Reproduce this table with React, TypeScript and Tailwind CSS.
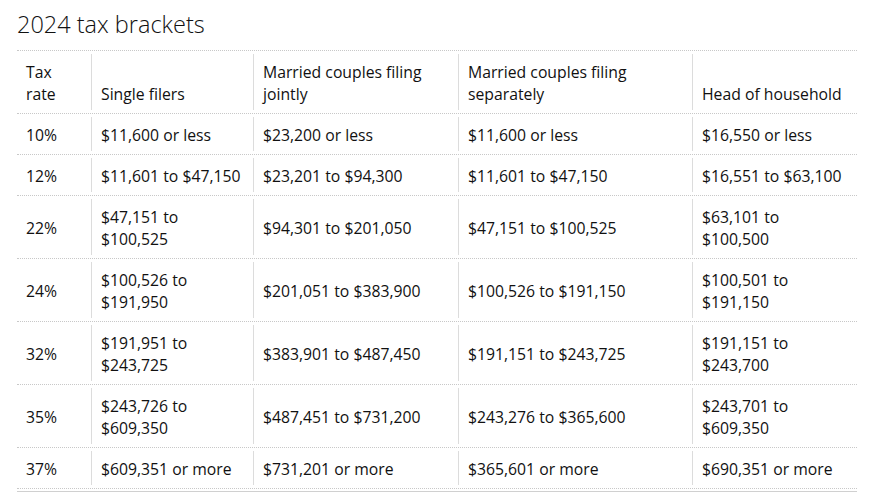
import React from "react";

const header = [
  "Tax rate",
  "Single filers",
  "Married couples filing jointly",
  "Married couples filing separately",
  "Head of household",
];

const rows: string[][] = [
  ["10%", "$11,600 or less", "$23,200 or less", "$11,600 or less", "$16,550 or less"],
  ["12%", "$11,601 to $47,150", "$23,201 to $94,300", "$11,601 to $47,150", "$16,551 to $63,100"],
  ["22%", "$47,151 to $100,525", "$94,301 to $201,050", "$47,151 to $100,525", "$63,101 to $100,500"],
  ["24%", "$100,526 to $191,950", "$201,051 to $383,900", "$100,526 to $191,150", "$100,501 to $191,150"],
  ["32%", "$191,951 to $243,725", "$383,901 to $487,450", "$191,151 to $243,725", "$191,151 to $243,700"],
  ["35%", "$243,726 to $609,350", "$487,451 to $731,200", "$243,276 to $365,600", "$243,701 to $609,350"],
  ["37%", "$609,351 or more", "$731,201 or more", "$365,601 or more", "$690,351 or more"],
];

const gridCols = "grid grid-cols-[74px_162px_205px_234px_165px]";

export default function App() {
  return (
    <div
      className="w-[881px] h-[501px] bg-white text-[#111] pl-[17px]"
      style={{ fontFamily: "'Open Sans', 'Noto Sans', sans-serif" }}
    >
      <h1 className="pt-[9px] h-[50px] text-[23.5px] leading-[30px] font-light">2024 tax brackets</h1>
      <div className="w-[840px] border-t border-dotted border-[#c8c8c8]">
        <div className={`${gridCols} py-[3px] border-b border-dotted border-[#c8c8c8]`}>
          {header.map((h, i) => (
            <div
              key={i}
              className={`flex items-end pl-[9px] pr-[8px] pt-[7px] pb-[5px] text-[15.75px] leading-[22px] ${i > 0 ? "border-l border-[#dcdcdc]" : ""}`}
            >
              {h}
            </div>
          ))}
        </div>
        {rows.map((r, ri) => (
          <div key={ri} className={`${gridCols} py-[3px] border-b border-dotted border-[#c8c8c8]`}>
            {r.map((c, i) => (
              <div
                key={i}
                className={`flex items-center pl-[9px] pr-[8px] pt-[7px] pb-[5px] text-[15.75px] leading-[22px] ${i > 0 ? "border-l border-[#dcdcdc]" : ""}`}
              >
                {c}
              </div>
            ))}
          </div>
        ))}
        <div className="mt-[2px] border-t border-[#d0d0d0]" />
      </div>
    </div>
  );
}
